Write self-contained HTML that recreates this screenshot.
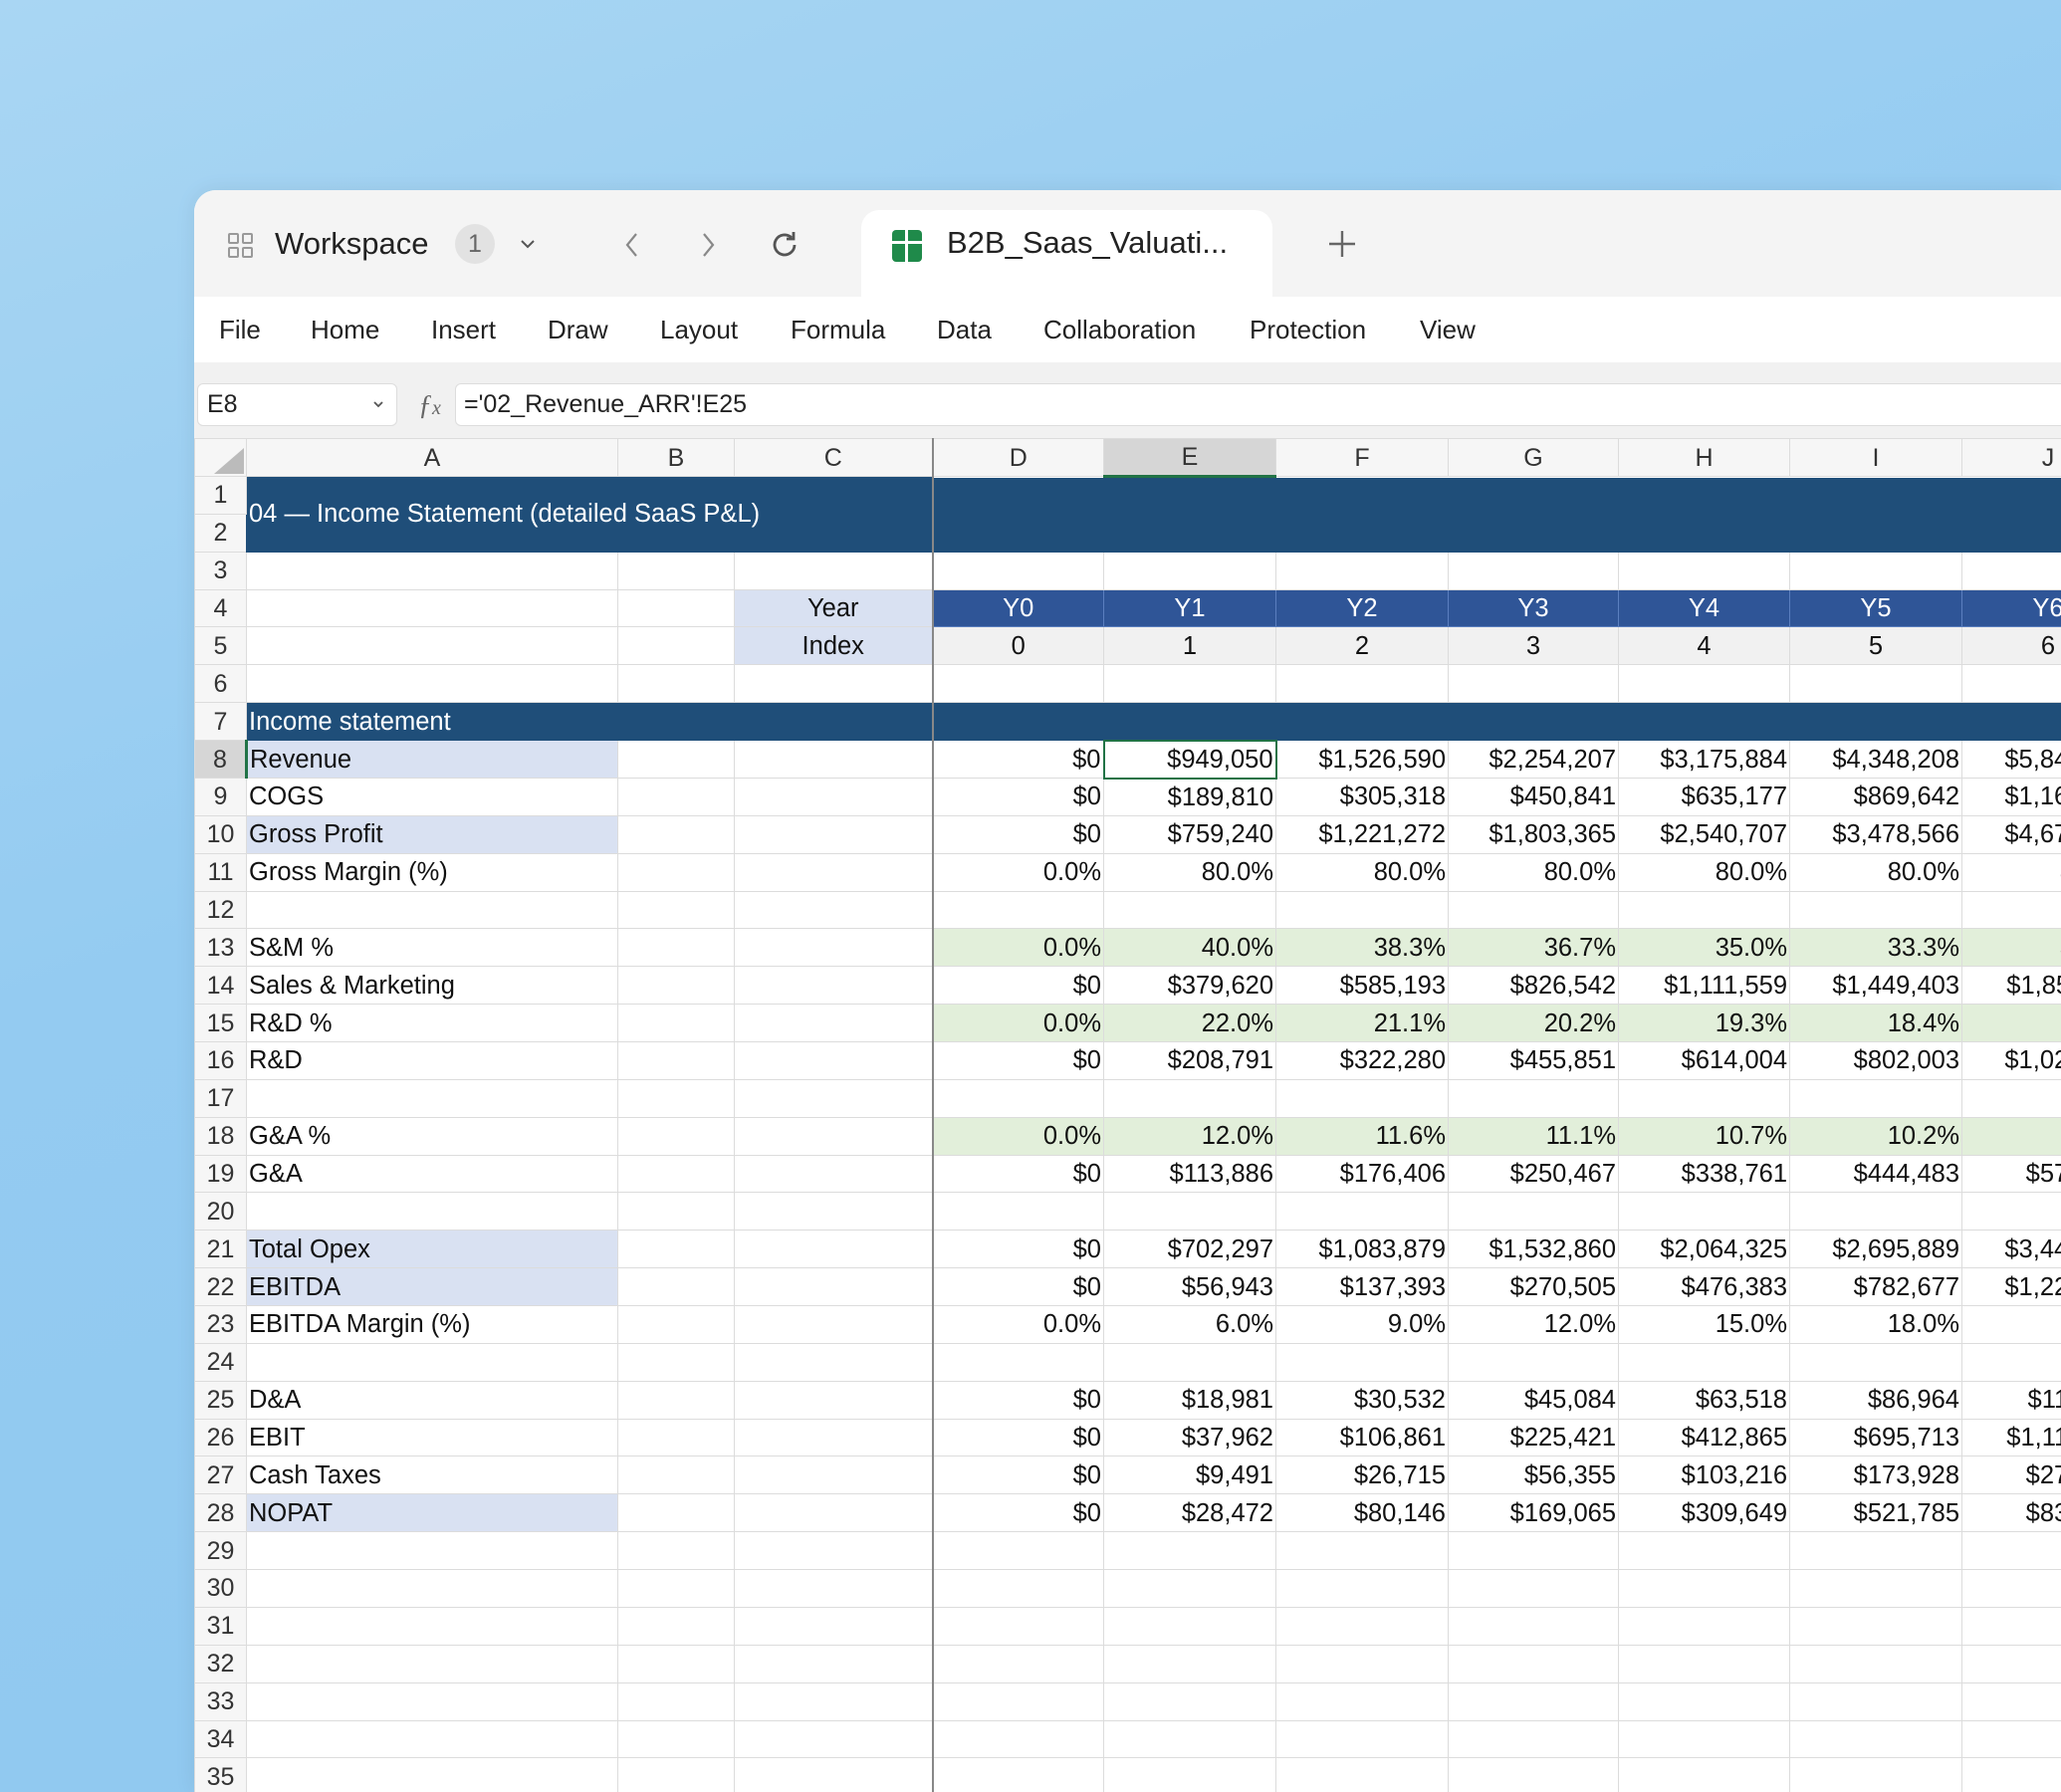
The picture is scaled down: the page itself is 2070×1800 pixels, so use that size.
<!DOCTYPE html>
<html><head><meta charset="utf-8">
<style>
*{box-sizing:border-box;margin:0;padding:0}
html,body{width:2070px;height:1800px;overflow:hidden}
body{background:linear-gradient(160deg,#a9d6f3 0%,#94cbf1 40%,#8ec7ef 100%);font-family:"Liberation Sans",sans-serif;position:relative}
.win{position:absolute;left:195px;top:191px;width:1875px;height:1609px;background:#fff;border-top-left-radius:22px;overflow:hidden;box-shadow:0 0 20px rgba(0,0,0,.08)}
.tabbar{position:absolute;left:0;top:0;width:100%;height:107px;background:#f4f4f4}
.tab{position:absolute;left:670px;top:20px;width:413px;height:90px;background:#fff;border-radius:18px 18px 0 0}
.menu{position:absolute;left:0;top:107px;width:100%;height:66px;background:#fff;font-size:26px;color:#222}
.menu span{position:absolute;top:18px}
.fbar{position:absolute;left:0;top:173px;width:100%;height:76px;background:#f1f1f1}
.box{position:absolute;background:#fff;border:1px solid #ddd;border-radius:6px;font-size:25px;color:#222}
table{position:absolute;left:0;top:249px;width:1948px;border-collapse:collapse;table-layout:fixed;font-size:25.5px;color:#111}
td{height:37.86px;border:1px solid #dcdcdc;white-space:nowrap;overflow:hidden;padding:0 2px;text-align:right;line-height:36px}
tr.h td{height:37px;text-align:center;color:#333;background:#f6f6f6;font-size:25px}
td.rh{background:#f6f6f6;text-align:center;color:#333;padding:0;font-size:25px}
td.a{text-align:left;padding-left:2px}
td.fz{border-right:2px solid #888}
.t{background:#1f4e79;color:#fff;border-color:#1f4e79}
.y{background:#2f5597;color:#fff;text-align:center;border-color:#5b7fbf}
.lv{background:#d9e1f2}
.gr{background:#f1f1f1;text-align:center}
.gn{background:#e2efda}
</style></head><body>
<div class="win">
 <div class="tabbar">
  <svg style="position:absolute;left:33px;top:42px" width="28" height="28" viewBox="0 0 28 28" fill="none" stroke="#999" stroke-width="2"><rect x="2" y="2" width="9" height="9" rx="1"/><rect x="16" y="2" width="9" height="9" rx="1"/><rect x="2" y="16" width="9" height="9" rx="1"/><rect x="16" y="16" width="9" height="9" rx="1"/></svg>
  <div style="position:absolute;left:81px;top:36px;font-size:31px;color:#222">Workspace</div>
  <div style="position:absolute;left:262px;top:34px;width:40px;height:40px;border-radius:20px;background:#e2e2e2;text-align:center;line-height:40px;font-size:25px;color:#666">1</div>
  <svg style="position:absolute;left:326px;top:48px" width="18" height="12" viewBox="0 0 18 12" fill="none" stroke="#555" stroke-width="2"><path d="M3 3l6 6 6-6"/></svg>
  <svg style="position:absolute;left:430px;top:41px" width="20" height="28" viewBox="0 0 20 28" fill="none" stroke="#888" stroke-width="2.2"><path d="M14 3L5 14l9 11"/></svg>
  <svg style="position:absolute;left:506px;top:41px" width="20" height="28" viewBox="0 0 20 28" fill="none" stroke="#888" stroke-width="2.2"><path d="M6 3l9 11-9 11"/></svg>
  <svg style="position:absolute;left:576px;top:38px" width="34" height="34" viewBox="0 0 34 34" fill="none" stroke="#555" stroke-width="2.8"><path d="M27 17a10 10 0 1 1-3-7.2"/><path d="M26 4v7h-7"/></svg>
  <div class="tab"></div>
  <svg style="position:absolute;left:701px;top:40px" width="30" height="32" viewBox="0 0 30 32"><rect x="0" y="0" width="30" height="32" rx="4" fill="#1f8a4a"/><rect x="13" y="0" width="3" height="32" fill="#fff"/><rect x="0" y="11" width="30" height="3" fill="#fff"/></svg>
  <div style="position:absolute;left:756px;top:35px;font-size:31px;color:#222">B2B_Saas_Valuati...</div>
  <svg style="position:absolute;left:1138px;top:39px" width="30" height="30" viewBox="0 0 30 30" stroke="#666" stroke-width="2.4"><path d="M15 2v26M2 15h26"/></svg>
 </div>
 <div class="menu">
  <span style="left:25px">File</span><span style="left:117px">Home</span><span style="left:238px">Insert</span><span style="left:355px">Draw</span><span style="left:468px">Layout</span><span style="left:599px">Formula</span><span style="left:746px">Data</span><span style="left:853px">Collaboration</span><span style="left:1060px">Protection</span><span style="left:1231px">View</span>
 </div>
 <div class="fbar">
  <div class="box" style="left:3px;top:21px;width:201px;height:43px;line-height:41px;padding-left:9px">E8<svg style="position:absolute;right:12px;top:16px" width="12" height="9" viewBox="0 0 12 9" fill="none" stroke="#555" stroke-width="1.8"><path d="M2 2l4 4 4-4"/></svg></div>
  <div style="position:absolute;left:225px;top:28px;font-size:28px;color:#666;font-style:italic;font-family:'Liberation Serif',serif">ƒ<span style="font-size:20px">x</span></div>
  <div class="box" style="left:262px;top:21px;width:1700px;height:43px;line-height:41px;padding-left:8px">='02_Revenue_ARR'!E25</div>
 </div>
 <table>
  <colgroup><col style="width:52px"><col style="width:373px"><col style="width:117px"><col style="width:199px"><col style="width:172px"><col style="width:173px"><col style="width:173px"><col style="width:171px"><col style="width:172px"><col style="width:173px"><col style="width:173px"></colgroup>
  <tr class="h"><td style="position:relative"><svg style="position:absolute;right:2px;bottom:2px" width="30" height="26"><path d="M30 0V26H0z" fill="#bbb"/></svg></td><td>A</td><td>B</td><td class="fz">C</td><td>D</td><td style="background:#d6d6d6;border-bottom:3px solid #217346">E</td><td>F</td><td>G</td><td>H</td><td>I</td><td>J</td></tr>
  <tr><td class="rh">1</td><td class="t a" colspan="3" rowspan="2" style="border-right:2px solid #888">04 — Income Statement (detailed SaaS P&amp;L)</td><td class="t" colspan="7" rowspan="2"></td></tr>
  <tr><td class="rh">2</td></tr>
  <tr><td class="rh">3</td><td></td><td></td><td class="fz"></td><td></td><td></td><td></td><td></td><td></td><td></td><td></td></tr>
  <tr><td class="rh">4</td><td></td><td></td><td class="fz lv" style="text-align:center">Year</td><td class="y">Y0</td><td class="y">Y1</td><td class="y">Y2</td><td class="y">Y3</td><td class="y">Y4</td><td class="y">Y5</td><td class="y">Y6</td></tr>
  <tr><td class="rh">5</td><td></td><td></td><td class="fz lv" style="text-align:center">Index</td><td class="gr">0</td><td class="gr">1</td><td class="gr">2</td><td class="gr">3</td><td class="gr">4</td><td class="gr">5</td><td class="gr">6</td></tr>
  <tr><td class="rh">6</td><td></td><td></td><td class="fz"></td><td></td><td></td><td></td><td></td><td></td><td></td><td></td></tr>
  <tr><td class="rh">7</td><td class="t a" colspan="3" style="border-right:2px solid #888">Income statement</td><td class="t" colspan="7"></td></tr>
  <tr><td class="rh" style="background:#d6d6d6;border-right:3px solid #217346">8</td><td class="a lv">Revenue</td><td></td><td class="fz"></td><td>$0</td><td style="border:2px solid #217346">$949,050</td><td>$1,526,590</td><td>$2,254,207</td><td>$3,175,884</td><td>$4,348,208</td><td>$5,841,990</td></tr>
  <tr><td class="rh">9</td><td class="a">COGS</td><td></td><td class="fz"></td><td>$0</td><td>$189,810</td><td>$305,318</td><td>$450,841</td><td>$635,177</td><td>$869,642</td><td>$1,168,398</td></tr>
  <tr><td class="rh">10</td><td class="a lv">Gross Profit</td><td></td><td class="fz"></td><td>$0</td><td>$759,240</td><td>$1,221,272</td><td>$1,803,365</td><td>$2,540,707</td><td>$3,478,566</td><td>$4,673,592</td></tr>
  <tr><td class="rh">11</td><td class="a">Gross Margin (%)</td><td></td><td class="fz"></td><td>0.0%</td><td>80.0%</td><td>80.0%</td><td>80.0%</td><td>80.0%</td><td>80.0%</td><td>80.0%</td></tr>
  <tr><td class="rh">12</td><td></td><td></td><td class="fz"></td><td></td><td></td><td></td><td></td><td></td><td></td><td></td></tr>
  <tr><td class="rh">13</td><td class="a">S&amp;M %</td><td></td><td class="fz"></td><td class="gn">0.0%</td><td class="gn">40.0%</td><td class="gn">38.3%</td><td class="gn">36.7%</td><td class="gn">35.0%</td><td class="gn">33.3%</td><td class="gn">31.7%</td></tr>
  <tr><td class="rh">14</td><td class="a">Sales &amp; Marketing</td><td></td><td class="fz"></td><td>$0</td><td>$379,620</td><td>$585,193</td><td>$826,542</td><td>$1,111,559</td><td>$1,449,403</td><td>$1,851,911</td></tr>
  <tr><td class="rh">15</td><td class="a">R&amp;D %</td><td></td><td class="fz"></td><td class="gn">0.0%</td><td class="gn">22.0%</td><td class="gn">21.1%</td><td class="gn">20.2%</td><td class="gn">19.3%</td><td class="gn">18.4%</td><td class="gn">17.5%</td></tr>
  <tr><td class="rh">16</td><td class="a">R&amp;D</td><td></td><td class="fz"></td><td>$0</td><td>$208,791</td><td>$322,280</td><td>$455,851</td><td>$614,004</td><td>$802,003</td><td>$1,022,349</td></tr>
  <tr><td class="rh">17</td><td></td><td></td><td class="fz"></td><td></td><td></td><td></td><td></td><td></td><td></td><td></td></tr>
  <tr><td class="rh">18</td><td class="a">G&amp;A %</td><td></td><td class="fz"></td><td class="gn">0.0%</td><td class="gn">12.0%</td><td class="gn">11.6%</td><td class="gn">11.1%</td><td class="gn">10.7%</td><td class="gn">10.2%</td><td class="gn">9.7%</td></tr>
  <tr><td class="rh">19</td><td class="a">G&amp;A</td><td></td><td class="fz"></td><td>$0</td><td>$113,886</td><td>$176,406</td><td>$250,467</td><td>$338,761</td><td>$444,483</td><td>$570,000</td></tr>
  <tr><td class="rh">20</td><td></td><td></td><td class="fz"></td><td></td><td></td><td></td><td></td><td></td><td></td><td></td></tr>
  <tr><td class="rh">21</td><td class="a lv">Total Opex</td><td></td><td class="fz"></td><td>$0</td><td>$702,297</td><td>$1,083,879</td><td>$1,532,860</td><td>$2,064,325</td><td>$2,695,889</td><td>$3,444,260</td></tr>
  <tr><td class="rh">22</td><td class="a lv">EBITDA</td><td></td><td class="fz"></td><td>$0</td><td>$56,943</td><td>$137,393</td><td>$270,505</td><td>$476,383</td><td>$782,677</td><td>$1,229,332</td></tr>
  <tr><td class="rh">23</td><td class="a">EBITDA Margin (%)</td><td></td><td class="fz"></td><td>0.0%</td><td>6.0%</td><td>9.0%</td><td>12.0%</td><td>15.0%</td><td>18.0%</td><td>21.0%</td></tr>
  <tr><td class="rh">24</td><td></td><td></td><td class="fz"></td><td></td><td></td><td></td><td></td><td></td><td></td><td></td></tr>
  <tr><td class="rh">25</td><td class="a">D&amp;A</td><td></td><td class="fz"></td><td>$0</td><td>$18,981</td><td>$30,532</td><td>$45,084</td><td>$63,518</td><td>$86,964</td><td>$116,840</td></tr>
  <tr><td class="rh">26</td><td class="a">EBIT</td><td></td><td class="fz"></td><td>$0</td><td>$37,962</td><td>$106,861</td><td>$225,421</td><td>$412,865</td><td>$695,713</td><td>$1,112,492</td></tr>
  <tr><td class="rh">27</td><td class="a">Cash Taxes</td><td></td><td class="fz"></td><td>$0</td><td>$9,491</td><td>$26,715</td><td>$56,355</td><td>$103,216</td><td>$173,928</td><td>$278,123</td></tr>
  <tr><td class="rh">28</td><td class="a lv">NOPAT</td><td></td><td class="fz"></td><td>$0</td><td>$28,472</td><td>$80,146</td><td>$169,065</td><td>$309,649</td><td>$521,785</td><td>$834,369</td></tr>
  <tr><td class="rh">29</td><td></td><td></td><td class="fz"></td><td></td><td></td><td></td><td></td><td></td><td></td><td></td></tr>
  <tr><td class="rh">30</td><td></td><td></td><td class="fz"></td><td></td><td></td><td></td><td></td><td></td><td></td><td></td></tr>
  <tr><td class="rh">31</td><td></td><td></td><td class="fz"></td><td></td><td></td><td></td><td></td><td></td><td></td><td></td></tr>
  <tr><td class="rh">32</td><td></td><td></td><td class="fz"></td><td></td><td></td><td></td><td></td><td></td><td></td><td></td></tr>
  <tr><td class="rh">33</td><td></td><td></td><td class="fz"></td><td></td><td></td><td></td><td></td><td></td><td></td><td></td></tr>
  <tr><td class="rh">34</td><td></td><td></td><td class="fz"></td><td></td><td></td><td></td><td></td><td></td><td></td><td></td></tr>
  <tr><td class="rh">35</td><td></td><td></td><td class="fz"></td><td></td><td></td><td></td><td></td><td></td><td></td><td></td></tr>
 </table>
</div>
</body></html>
